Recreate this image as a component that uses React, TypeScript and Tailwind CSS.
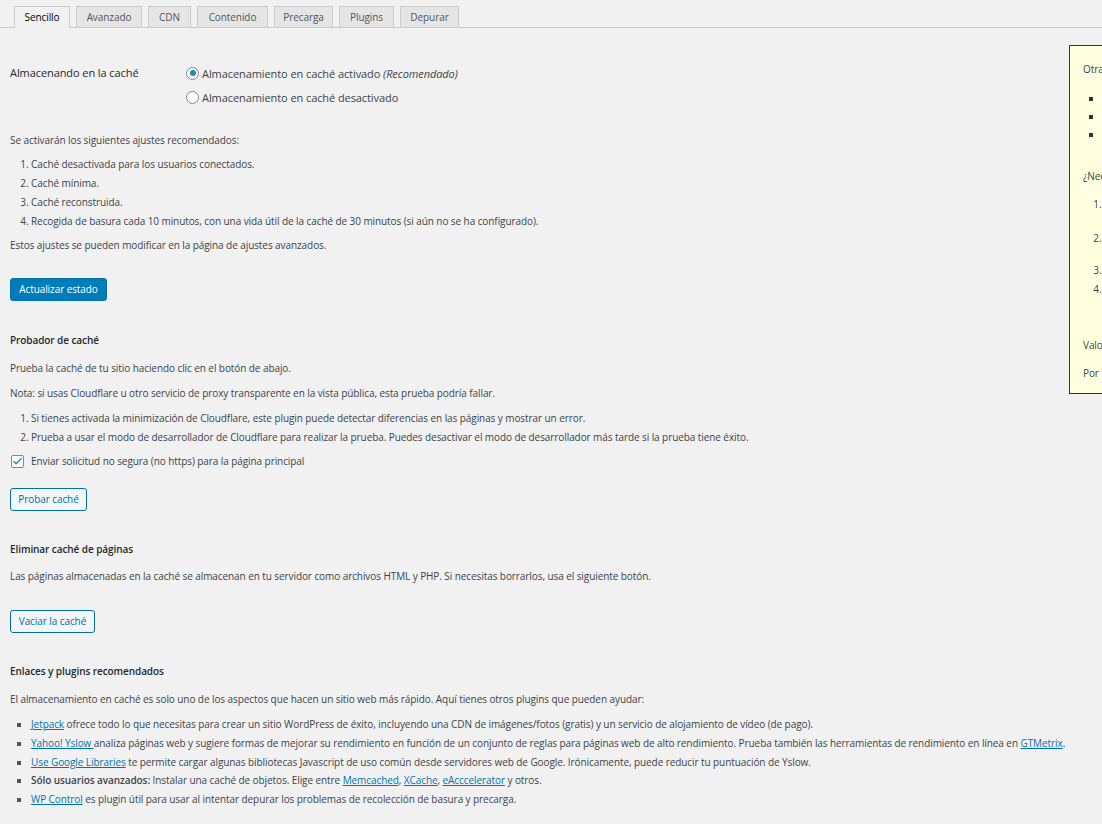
import { Check } from "lucide-react";

const tabs = [
  { label: "Sencillo", w: "w-[56px]", active: true },
  { label: "Avanzado", w: "w-[66px]" },
  { label: "CDN", w: "w-[43px]" },
  { label: "Contenido", w: "w-[71px]" },
  { label: "Precarga", w: "w-[59px]" },
  { label: "Plugins", w: "w-[55px]" },
  { label: "Depurar", w: "w-[59px]" },
];

const Radio = ({ checked, children }: { checked?: boolean; children: React.ReactNode }) => (
  <label className="flex h-[24px] items-center gap-[3px]">
    <span className="flex h-[13px] w-[13px] items-center justify-center rounded-full border border-[#7e8993] bg-white">
      {checked && <span className="h-[6px] w-[6px] rounded-full bg-[#1e8cbe]" />}
    </span>
    <span>{children}</span>
  </label>
);

const Link = ({ children }: { children: React.ReactNode }) => (
  <a href="#" className="text-[#0073aa] underline">
    {children}
  </a>
);

const Button = ({ children, w }: { children: React.ReactNode; w: string }) => (
  <button
    className={`flex h-[23px] ${w} items-center justify-center rounded-[3px] border border-[#0071a1] bg-[#f3f5f6] text-[#0071a1]`}
  >
    {children}
  </button>
);

export default function App() {
  return (
    <div className="min-h-screen w-full overflow-hidden bg-[#f1f1f1] font-['Open_Sans',sans-serif] text-[10px] tracking-[-0.08px] text-[#3c434a]">
      {/* Tabs */}
      <div className="flex h-[28px] items-end gap-[6px] border-b border-[#ccc] px-[14px]">
        {tabs.map((t) => (
          <div
            key={t.label}
            className={`-mb-px flex h-[22px] ${t.w} items-center justify-center border border-[#ccc] ${
              t.active ? "border-b-[#f1f1f1] bg-[#f1f1f1] text-[#000]" : "bg-[#e5e5e5] text-[#50575e]"
            }`}
          >
            {t.label}
          </div>
        ))}
      </div>

      <div className="flex">
        {/* Main column */}
        <div className="w-[1059px] shrink-0 pl-[10px] leading-[19px]">
          <div className="mt-[33px] flex">
            <div className="w-[176px] pt-[2px] text-[11px] leading-[20px] text-[#23282d]">Almacenando en la caché</div>
            <div className="text-[11px]">
              <Radio checked>
                Almacenamiento en caché activado <em>(Recomendado)</em>
              </Radio>
              <Radio>Almacenamiento en caché desactivado</Radio>
            </div>
          </div>

          <p className="mt-[22px]">Se activarán los siguientes ajustes recomendados:</p>
          <ol className="mt-[5px] list-decimal pl-[21px]">
            <li>Caché desactivada para los usuarios conectados.</li>
            <li>Caché mínima.</li>
            <li>Caché reconstruida.</li>
            <li>Recogida de basura cada 10 minutos, con una vida útil de la caché de 30 minutos (si aún no se ha configurado).</li>
          </ol>
          <p className="mt-[5px]">Estos ajustes se pueden modificar en la página de ajustes avanzados.</p>

          <button className="mt-[23px] flex h-[23px] w-[97px] items-center justify-center rounded-[3px] border border-[#0073aa] bg-[#007cba] text-white">
            Actualizar estado
          </button>

          <h3 className="mt-[30px] font-semibold text-[#23282d]">Probador de caché</h3>
          <p className="mt-[9px]">Prueba la caché de tu sitio haciendo clic en el botón de abajo.</p>
          <p className="mt-[6px]">Nota: si usas Cloudflare u otro servicio de proxy transparente en la vista pública, esta prueba podría fallar.</p>
          <ol className="mt-[6px] list-decimal pl-[21px]">
            <li>Si tienes activada la minimización de Cloudflare, este plugin puede detectar diferencias en las páginas y mostrar un error.</li>
            <li>Prueba a usar el modo de desarrollador de Cloudflare para realizar la prueba. Puedes desactivar el modo de desarrollador más tarde si la prueba tiene éxito.</li>
          </ol>
          <label className="mt-[5px] flex items-center gap-[7px]">
            <span className="ml-px flex h-[13px] w-[13px] items-center justify-center rounded-[2px] border border-[#7e8993] bg-white">
              <Check className="h-[11px] w-[11px] text-[#1e8cbe]" strokeWidth={3} />
            </span>
            Enviar solicitud no segura (no https) para la página principal
          </label>

          <div className="mt-[17px]">
            <Button w="w-[77px]">Probar caché</Button>
          </div>

          <h3 className="mt-[29px] font-semibold text-[#23282d]">Eliminar caché de páginas</h3>
          <p className="mt-[8px]">Las páginas almacenadas en la caché se almacenan en tu servidor como archivos HTML y PHP. Si necesitas borrarlos, usa el siguiente botón.</p>
          <div className="mt-[24px]">
            <Button w="w-[85px]">Vaciar la caché</Button>
          </div>

          <h3 className="mt-[29px] font-semibold text-[#23282d]">Enlaces y plugins recomendados</h3>
          <p className="mt-[9px]">El almacenamiento en caché es solo uno de los aspectos que hacen un sitio web más rápido. Aquí tienes otros plugins que pueden ayudar:</p>
          <ul className="mt-[6px] list-[square] whitespace-nowrap pl-[21px] leading-[18.75px] marker:text-[#555]">
            <li>
              <Link>Jetpack</Link> ofrece todo lo que necesitas para crear un sitio WordPress de éxito, incluyendo una CDN de imágenes/fotos (gratis) y un servicio de alojamiento de vídeo (de pago).
            </li>
            <li>
              <Link>Yahoo! Yslow </Link>analiza páginas web y sugiere formas de mejorar su rendimiento en función de un conjunto de reglas para páginas web de alto rendimiento. Prueba también las herramientas de rendimiento en línea en <Link>GTMetrix</Link>.
            </li>
            <li>
              <Link>Use Google Libraries</Link> te permite cargar algunas bibliotecas Javascript de uso común desde servidores web de Google. Irónicamente, puede reducir tu puntuación de Yslow.
            </li>
            <li>
              <strong className="font-semibold">Sólo usuarios avanzados:</strong> Instalar una caché de objetos. Elige entre <Link>Memcached</Link>, <Link>XCache</Link>, <Link>eAcccelerator</Link> y otros.
            </li>
            <li>
              <Link>WP Control</Link> es plugin útil para usar al intentar depurar los problemas de recolección de basura y precarga.
            </li>
          </ul>
        </div>

        {/* Sidebar */}
        <div className="mt-[17px] ml-[10px] h-[349px] w-[300px] shrink-0 border border-[#333] bg-[#ffffe0] px-[13px] leading-[18px] whitespace-nowrap">
          <h4 className="mt-[14px]">Otras herramientas del sitio</h4>
          <ul className="mt-[11px] list-[square] pl-[20px] marker:text-[#333]">
            <li>Mejora tu puntuación de velocidad</li>
            <li>Jetpack</li>
            <li>Akismet</li>
          </ul>
          <h4 className="mt-[24px]">¿Necesitas ayuda?</h4>
          <ol className="mt-[10px] list-decimal pl-[21px]">
            <li className="mb-[16px]">Usa el sistema de depuración</li>
            <li className="mb-[14px]">Preguntas frecuentes</li>
            <li className="mb-[1px]">Foro de soporte</li>
            <li>Versión de desarrollo</li>
          </ol>
          <h4 className="mt-[38px]">Valora este plugin</h4>
          <p className="mt-[10px]">Por favor, valora este plugin</p>
        </div>
      </div>
    </div>
  );
}
